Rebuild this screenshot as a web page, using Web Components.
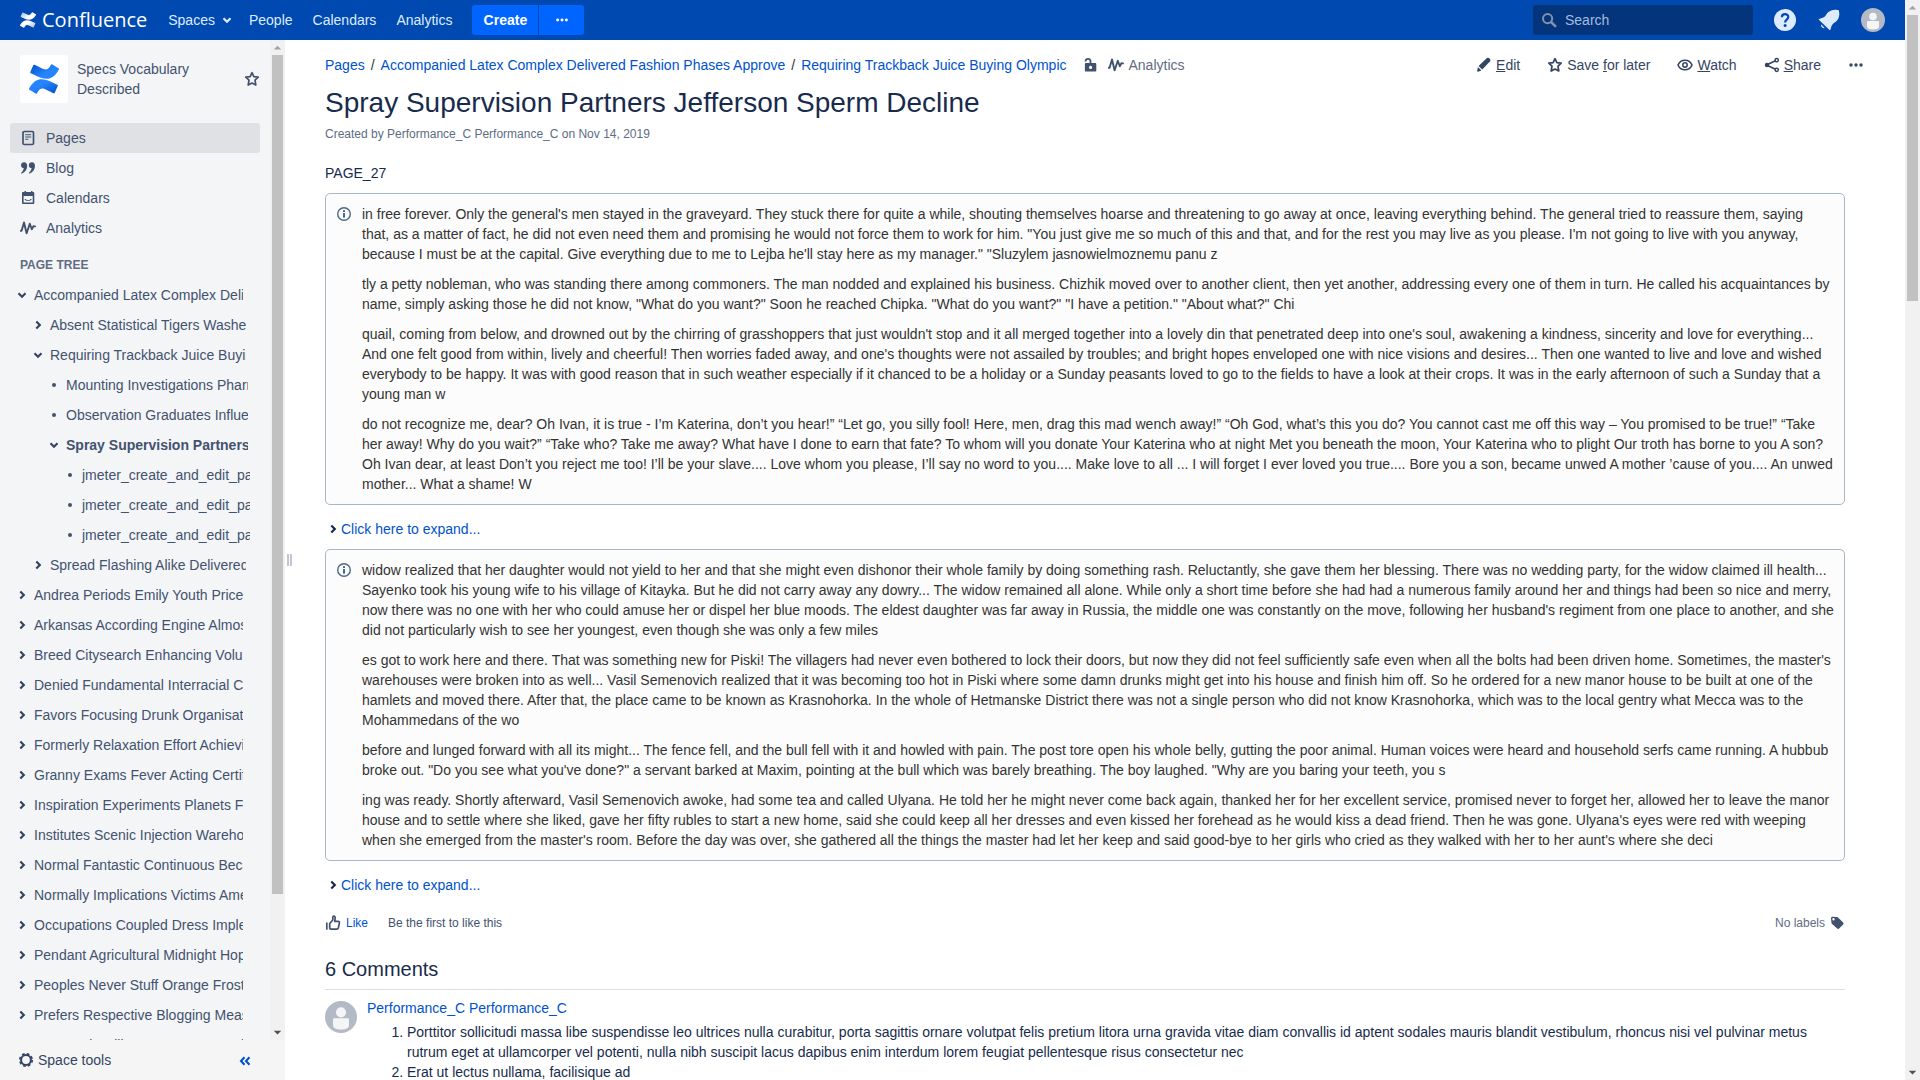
<!DOCTYPE html>
<html lang="en">
<head>
<meta charset="utf-8">
<title>Spray Supervision Partners Jefferson Sperm Decline - Confluence</title>
<style>
html, body { margin: 0; height: 100%; }
body { font: 14px/20px "Liberation Sans", Arial, sans-serif; color: #172b4d; background: #fff; overflow: hidden; }
</style>
</head>
<body>
<wiki-app></wiki-app>
<script>
const ICONS = {
  confluence: ['0 0 24 24', '<path d="M.87 18.257c-.248.382-.53.875-.763 1.245a.764.764 0 0 0 .255 1.04l4.965 3.054a.764.764 0 0 0 1.058-.26c.199-.332.454-.763.733-1.221 1.967-3.247 3.945-2.853 7.508-1.146l4.957 2.337a.764.764 0 0 0 1.028-.382l2.364-5.346a.764.764 0 0 0-.382-1 599.851 599.851 0 0 1-4.965-2.361C10.911 10.97 5.224 11.185.87 18.257z" fill="url(#a)"/><path d="M23.131 5.743c.249-.405.531-.875.764-1.25a.764.764 0 0 0-.256-1.034L18.675.404a.764.764 0 0 0-1.058.26c-.195.335-.451.763-.734 1.225-1.966 3.246-3.945 2.85-7.508 1.146L4.437.694a.764.764 0 0 0-1.027.382L1.046 6.422a.764.764 0 0 0 .382 1c1.039.49 3.105 1.467 4.965 2.361 6.698 3.246 12.392 3.029 16.738-4.04z" fill="url(#b)"/><defs><linearGradient id="a" x1="1" y1=".9" x2=".2" y2=".2"><stop offset="0" stop-color="var(--logo-from,#0052cc)"/><stop offset=".7" stop-color="var(--logo-to,#2684ff)"/></linearGradient><linearGradient id="b" x1="0" y1=".1" x2=".8" y2=".8"><stop offset="0" stop-color="var(--logo-from,#0052cc)"/><stop offset=".7" stop-color="var(--logo-to,#2684ff)"/></linearGradient></defs>'],
  down: ['0 0 16 16', '<path d="M4.5 6.3 8 9.8l3.5-3.5" fill="none" stroke="currentColor" stroke-width="2.2"/>'],
  right: ['0 0 16 16', '<path d="M6.3 4.5 9.8 8l-3.5 3.5" fill="none" stroke="currentColor" stroke-width="2.2"/>'],
  dot: ['0 0 16 16', '<circle cx="8" cy="8" r="2" fill="currentColor"/>'],
  more: ['0 0 16 16', '<circle cx="3" cy="8" r="1.7" fill="currentColor"/><circle cx="8" cy="8" r="1.7" fill="currentColor"/><circle cx="13" cy="8" r="1.7" fill="currentColor"/>'],
  search: ['0 0 16 16', '<circle cx="6.6" cy="6.6" r="4.6" fill="none" stroke="currentColor" stroke-width="2"/><path d="m10.2 10.2 4 4" stroke="currentColor" stroke-width="2.6" stroke-linecap="round"/>'],
  help: ['0 0 24 24', '<circle cx="12" cy="12" r="11" fill="currentColor"/><path d="M8.9 9.2c0-4 6.4-4 6.4-.1 0 2.500-3.200 2.700-3.200 5.300" fill="none" stroke="#0049b0" stroke-width="2.200"/><circle cx="12.100" cy="17.500" r="1.500" fill="#0049b0"/>'],
  bell: ['0 0 24 24', '<path d="M22 3.500c.200-1.200-.5-1.800-1.600-1.500-3-.8-7.200.2-9.600 2.600-1.500 1.600-2 3.300-3.200 4.200-1.800 1.300-3.700 1.500-5.400 2.100-.6.300-.5.700-.1 1.100l10.100 9.800c.5.400 1 .400 1.200-.1.600-1.700.7-3.600 2.100-5.300.9-1.200 2.600-1.800 4.100-3.300 2.500-2.500 3.300-6.800 2.400-9.600zM4.300 16.600l3.300 3.300c-1.100 1.500-4.700-1.700-3.300-3.300z" fill="currentColor"/>'],
  avatar: ['0 0 24 24', '<circle cx="12" cy="12" r="12" fill="#b3bac5"/><circle cx="12" cy="8.500" r="3.800" fill="#f4f5f7"/><path d="M6 13.800q0-.8.8-.8h10.400q.8 0 .8.8v4.400q0 3.300-6 3.300t-6-3.300z" fill="#f4f5f7"/>'],
  star: ['0 0 16 16', '<path d="m8 1.700 1.850 3.950 4.350.55-3.200 3 .8 4.800L8 12l-3.800 2 .8-4.800-3.200-3 4.350-.55z" fill="none" stroke="currentColor" stroke-width="1.700" stroke-linejoin="round"/>'],
  page: ['0 0 16 16', '<rect x="3" y="1.500" width="10.500" height="13" rx="1.300" fill="none" stroke="currentColor" stroke-width="1.700"/><path d="M5.200 4.700h6M5.200 7h6M5.200 9.300h3.200" stroke="currentColor" stroke-width="1.100"/>'],
  quote: ['0 0 16 16', '<path d="M4.200 2.200C2.300 2.200 1 3.500 1 5.200s1.200 2.900 2.800 2.900c-.2 1.900-1.200 3.300-2.600 4.700-.3.400.1 1 .7.800C5.300 12.300 7.200 9.200 7.200 6c0-2.300-1.200-3.800-3-3.800zM12 2.200c-1.900 0-3.200 1.300-3.200 3s1.200 2.900 2.800 2.900c-.2 1.900-1.200 3.300-2.600 4.700-.3.400.1 1 .7.800C13.100 12.300 15 9.200 15 6c0-2.300-1.200-3.800-3-3.800z" fill="currentColor"/>'],
  calendar: ['0 0 16 16', '<path d="M3 2h1.500V1H6v1h5V1h1.500v1H13c.8 0 1.300.5 1.300 1.300v9.400c0 .8-.5 1.300-1.300 1.300H3.300c-.8 0-1.300-.5-1.300-1.300V3.300C2 2.500 2.300 2 3 2zm.6 4v6.400h9.100V6zm.9 2.900h1.300c1 1.700 3.700 1.700 4.700 0h1.300c-1.300 2.800-6 2.800-7.300 0z" fill="currentColor" fill-rule="evenodd"/>'],
  pulse: ['0 0 16 16', '<path d="M.8 10.800h.8L4 2.500l2.600 10.800 3.200-9.600 2 5.600 1.500-3 1.700.1" fill="none" stroke="currentColor" stroke-width="1.900" stroke-linejoin="round" stroke-linecap="round"/>'],
  lock: ['0 0 16 16', '<path d="M3.500 4.500c0-3 4-3.600 5-.9V7" fill="none" stroke="currentColor" stroke-width="1.800"/><path fill-rule="evenodd" d="M4 6h9.200c.6 0 1.100.5 1.100 1.100v6.300c0 .6-.5 1.100-1.100 1.100H4c-.6 0-1.100-.5-1.100-1.100V7.100C2.900 6.500 3.400 6 4 6zm4.600 2.800a1.600 1.600 0 1 0 0 3.200 1.600 1.600 0 0 0 0-3.200z" fill="currentColor"/>'],
  edit: ['0 0 16 16', '<path d="M10.400 1.500c1.100-1.100 2.300-.9 3.200 0 1 1 1.100 2.200.1 3.300L6.200 12.500 2.600 8.900zM1.900 9.900l3.500 3.500-3.400 1.400c-.6.200-1-.2-.8-.8z" fill="currentColor"/>'],
  eye: ['0 0 16 16', '<path d="M1 8c2.700-6.400 11.300-6.400 14 0-2.700 6.400-11.300 6.400-14 0z" fill="none" stroke="currentColor" stroke-width="1.600"/><circle cx="8" cy="8" r="2.200" fill="none" stroke="currentColor" stroke-width="1.500"/>'],
  share: ['0 0 16 16', '<path d="m4 7.300 7.500-3.600M4 8.700l7.500 3.600" stroke="currentColor" stroke-width="1.500"/><g fill="#fff" stroke="currentColor" stroke-width="1.500"><circle cx="3" cy="8" r="1.500" fill="currentColor"/><circle cx="12.700" cy="3.200" r="1.600"/><circle cx="12.700" cy="12.800" r="1.600"/></g>'],
  info: ['0 0 16 16', '<circle cx="8" cy="8" r="6.300" fill="none" stroke="currentColor" stroke-width="1.400"/><rect x="7" y="7" width="2" height="4.600" fill="currentColor"/><rect x="7" y="4.200" width="2" height="1.800" fill="currentColor"/>'],
  like: ['0 0 16 16', '<path d="M1.800 7.500v7.200" stroke="currentColor" stroke-width="1.700"/><path d="M4.700 8.500 7.800 5V2.200c.4-1.600 2.200-1.200 2.400.3l-.4 3.800h3.300c1 0 1.500.7 1.300 1.600l-1.100 5.100c-.2.700-.7 1.100-1.400 1.100H5.700c-.6 0-1-.4-1-1z" fill="none" stroke="currentColor" stroke-width="1.700" stroke-linejoin="round"/>'],
  tag: ['0 0 16 16', '<path fill-rule="evenodd" d="M2 3.300C2 2.300 2.600 1.700 3.600 1.700l4.300.3c.6 0 1 .3 1.400.7l4.600 4.600c.8.800.8 1.700 0 2.500l-3.500 3.500c-.8.8-1.700.8-2.500 0L3.100 8.900c-.4-.4-.7-.8-.7-1.400zm2.500-.3a1.200 1.200 0 1 0 0 2.400 1.200 1.200 0 0 0 0-2.400z" fill="currentColor"/>'],
  gear: ['0 0 16 16', '<circle cx="8" cy="8" r="4.900" fill="none" stroke="currentColor" stroke-width="2"/><circle cx="8" cy="8" r="6.200" fill="none" stroke="currentColor" stroke-width="1.700" stroke-dasharray="2.700 2.170"/>'],
  collapse: ['0 0 16 16', '<path d="M7.500 5.300 4 9l3.500 3.700M12.500 5.300 9 9l3.500 3.700" fill="none" stroke="currentColor" stroke-width="2.100"/>'],
  arrowup: ['0 0 16 16', '<path d="m4 10 4-4 4 4z" fill="currentColor"/>'],
  arrowdown: ['0 0 16 16', '<path d="m4 6 4 4 4-4z" fill="currentColor"/>']
};

function define(name, html, setup) {
  const template = document.createElement('template');
  template.innerHTML = html;
  customElements.define(name, class extends HTMLElement {
    connectedCallback() {
      if (this.shadowRoot) return;
      const root = this.attachShadow({ mode: 'open' });
      root.append(template.content.cloneNode(true));
      if (setup) setup(this, root);
    }
  });
}

define('ui-icon', `<style>:host{display:inline-block;flex:none;width:16px;height:16px}svg{display:block;width:100%;height:100%}</style>`, (el, root) => {
  const [box, shapes] = ICONS[el.getAttribute('name')] || ['0 0 16 16', ''];
  root.innerHTML += `<svg viewBox="${box}" aria-hidden="true">${shapes}</svg>`;
});

define('scroll-track', `<style>
:host{display:flex;flex-direction:column;flex:none;width:15px;background:#f1f1f1}
ui-icon{width:15px;height:15px;color:#505050}
ui-icon[name=arrowup]{color:#a3a3a3}
.rail{flex:1}
.thumb{height:var(--thumb,50%);margin:0 2px;background:#c1c1c1}
</style><ui-icon name="arrowup"></ui-icon><div class="rail"><div class="thumb"></div></div><ui-icon name="arrowdown"></ui-icon>`);

define('nav-link', `<style>
:host{display:block}
a{display:flex;align-items:center;height:40px;padding:0 10px;color:#deebff;text-decoration:none}
:host([menu]) a{padding-right:4px;gap:4px}
ui-icon{display:none}
:host([menu]) ui-icon{display:block;width:16px;height:16px}
</style><a href="#"><slot></slot><ui-icon name="down"></ui-icon></a>`);

define('top-header', `<style>
:host{display:flex;align-items:center;height:40px;background:#0049b0;color:#deebff;padding:0 20px}
.brand{display:flex;align-items:center;gap:6px;color:#fff;text-decoration:none;font:20px/40px "Open Sans",sans-serif;margin-right:11px;--logo-from:#9dbbe6;--logo-to:#fff}
.brand ui-icon{width:16px}
nav{display:flex}
button{border:0;padding:0;height:30px;background:#0065ff;color:#fff;font:bold 14px/20px "Liberation Sans",Arial,sans-serif;display:flex;align-items:center;justify-content:center}
.create{display:flex;gap:1px;margin-left:10px;margin-right:auto}
.create button:first-child{width:66px;border-radius:3px 0 0 3px}
.create button:last-child{width:45px;border-radius:0 3px 3px 0}
.create ui-icon{width:14px}
.search{display:flex;align-items:center;gap:8px;box-sizing:border-box;width:220px;height:30px;padding:0 8px;border-radius:3px;background:#03347c;color:#8391aa;margin-right:20px}
input{min-width:0;flex:1;border:0;padding:0;background:none;color:#deebff;font:14px/20px "Liberation Sans",Arial,sans-serif;outline:0}
input::placeholder{color:#a5bbdd;opacity:1}
.tools{display:flex;gap:20px}
.tools button{background:none;color:#deebff;width:24px}
.tools ui-icon{width:24px;height:24px}
</style>
<a class="brand" href="#"><ui-icon name="confluence"></ui-icon><span>Confluence</span></a>
<nav><nav-link menu>Spaces</nav-link><nav-link>People</nav-link><nav-link>Calendars</nav-link><nav-link>Analytics</nav-link></nav>
<div class="create"><button>Create</button><button aria-label="Create from template"><ui-icon name="more"></ui-icon></button></div>
<label class="search"><ui-icon name="search"></ui-icon><input type="text" placeholder="Search" aria-label="Search"></label>
<div class="tools"><button aria-label="Help"><ui-icon name="help"></ui-icon></button><button aria-label="Notifications"><ui-icon name="bell"></ui-icon></button><button aria-label="Profile"><ui-icon name="avatar"></ui-icon></button></div>`);

define('side-link', `<style>
:host{display:block;border-radius:3px}
:host([active]){background:#dfe1e5}
a{display:flex;align-items:center;gap:10px;height:30px;padding:0 10px;color:#42526e;text-decoration:none}
</style>`, (el, root) => {
  root.innerHTML += `<a href="#"><ui-icon name="${el.getAttribute('icon')}"></ui-icon><slot></slot></a>`;
});

define('tree-item', `<style>
:host{display:flex;align-items:center;gap:4px;height:30px;margin-left:calc(14px + var(--level,0)*16px);margin-right:calc(27px - var(--level,0)*2px);overflow:hidden;white-space:nowrap;color:#42526e}
:host([level]){margin-right:calc(26px - var(--level,0)*2px)}
:host([current]){font-weight:bold}
button{border:0;background:none;padding:0;width:16px;height:16px;color:#344563;flex:none}
a{color:inherit;text-decoration:none;flex:none}
</style>`, (el, root) => {
  const state = el.getAttribute('state') || 'right';
  el.style.setProperty('--level', el.getAttribute('level') || 0);
  root.innerHTML += (state === 'dot' ? '<ui-icon name="dot"></ui-icon>' : `<button aria-label="Toggle"><ui-icon name="${state}"></ui-icon></button>`) + '<a href="#"><slot></slot></a>';
});

define('side-bar', `<style>
:host{display:flex;flex-direction:column;flex:none;width:285px;background:#f4f5f7;color:#42526e}
.body{flex:1;min-height:0;display:flex}
.scroll{flex:1;min-width:0;overflow:hidden}
.space{display:flex;align-items:center;padding:15px 10px 20px 20px;gap:9px}
.logo{flex:none;display:grid;place-items:center;width:48px;height:48px;border-radius:3px;background:#fff}
.logo ui-icon{width:30px;height:30px}
.space a{flex:1;color:inherit;text-decoration:none}
button{border:0;background:none;padding:0;color:inherit;font:inherit;display:flex;align-items:center;gap:4px}
nav{padding:0 10px}
h2{margin:12px 20px 5px;font-size:12px;line-height:20px;color:#5e6c84}
footer{display:flex;align-items:center;justify-content:space-between;height:40px;padding:0 32px 0 18px;background:#f5f5f5;color:#344563}
footer button:last-child{color:#0052cc}
</style>
<div class="body"><div class="scroll">
<div class="space"><div class="logo"><ui-icon name="confluence"></ui-icon></div><a href="#">Specs Vocabulary Described</a><button aria-label="Star space"><ui-icon name="star"></ui-icon></button></div>
<nav><side-link active icon="page">Pages</side-link><side-link icon="quote">Blog</side-link><side-link icon="calendar">Calendars</side-link><side-link icon="pulse">Analytics</side-link></nav>
<h2>PAGE TREE</h2>
<tree-item state="down">Accompanied Latex Complex Delivered</tree-item>
<tree-item level="1">Absent Statistical Tigers Washed</tree-item>
<tree-item level="1" state="down">Requiring Trackback Juice Buying</tree-item>
<tree-item level="2" state="dot">Mounting Investigations Pharmacy</tree-item>
<tree-item level="2" state="dot">Observation Graduates Influence</tree-item>
<tree-item level="2" state="down" current>Spray Supervision Partners Jefferson</tree-item>
<tree-item level="3" state="dot">jmeter_create_and_edit_page</tree-item>
<tree-item level="3" state="dot">jmeter_create_and_edit_page</tree-item>
<tree-item level="3" state="dot">jmeter_create_and_edit_page</tree-item>
<tree-item level="1">Spread Flashing Alike Delivered</tree-item>
<tree-item>Andrea Periods Emily Youth Prices</tree-item>
<tree-item>Arkansas According Engine Almost</tree-item>
<tree-item>Breed Citysearch Enhancing Volume</tree-item>
<tree-item>Denied Fundamental Interracial Car</tree-item>
<tree-item>Favors Focusing Drunk Organisation</tree-item>
<tree-item>Formerly Relaxation Effort Achieving</tree-item>
<tree-item>Granny Exams Fever Acting Certified</tree-item>
<tree-item>Inspiration Experiments Planets For</tree-item>
<tree-item>Institutes Scenic Injection Warehouse</tree-item>
<tree-item>Normal Fantastic Continuous Became</tree-item>
<tree-item>Normally Implications Victims Amend</tree-item>
<tree-item>Occupations Coupled Dress Implement</tree-item>
<tree-item>Pendant Agricultural Midnight Hope</tree-item>
<tree-item>Peoples Never Stuff Orange Frost</tree-item>
<tree-item>Prefers Respective Blogging Measet</tree-item>
<tree-item>Seasonal Rolling Governments Hill</tree-item>
</div><scroll-track style="--thumb:86.5%"></scroll-track></div>
<footer><button><ui-icon name="gear"></ui-icon>Space tools</button><button aria-label="Collapse sidebar"><ui-icon name="collapse"></ui-icon></button></footer>`);

define('bread-crumbs', `<style>
:host{display:flex;align-items:center;white-space:nowrap}
a{color:#0052cc;text-decoration:none}
.sep{padding:0 6px;color:#333}
ui-icon{color:#42526e}
.lock{margin:0 10px 0 15px}
.stat{display:flex;align-items:center;gap:5px;color:#5e6c84}
</style>
<a href="#">Pages</a><span class="sep">/</span><a href="#">Accompanied Latex Complex Delivered Fashion Phases Approve</a><span class="sep">/</span><a href="#">Requiring Trackback Juice Buying Olympic</a><ui-icon class="lock" name="lock"></ui-icon><a class="stat" href="#"><ui-icon name="pulse"></ui-icon>Analytics</a>`);

define('page-actions', `<style>
:host{display:flex;gap:27px;white-space:nowrap}
a,button{display:flex;align-items:center;gap:4px;color:#344563;text-decoration:none;border:0;background:none;padding:0;font:inherit}
</style>
<a href="#"><ui-icon name="edit"></ui-icon><span><u>E</u>dit</span></a>
<button><ui-icon name="star"></ui-icon><span>Save <u>f</u>or later</span></button>
<button><ui-icon name="eye"></ui-icon><span><u>W</u>atch</span></button>
<button><ui-icon name="share"></ui-icon><span><u>S</u>hare</span></button>
<button aria-label="More"><ui-icon name="more"></ui-icon></button>`);

define('info-panel', `<style>
:host{display:flex;gap:10px;padding:10px;border:1px solid #aab8c6;border-radius:5px;background:#fcfcfc;color:#333}
ui-icon{color:#4a6785;margin:2px 0 0}
.text{flex:1;min-width:0;display:flex;flex-direction:column;gap:10px}
::slotted(p){margin:0}
</style><ui-icon name="info"></ui-icon><div class="text"><slot></slot></div>`);

define('expand-link', `<style>
:host{display:block;margin:14px 0 10px}
button{display:flex;align-items:center;border:0;background:none;padding:0;font:inherit;color:#0052cc}
ui-icon{color:#172b4d}
</style><button><ui-icon name="right"></ui-icon><slot></slot></button>`);

define('page-comment', `<style>
:host{display:flex;gap:10px;border-top:1px solid #ddd;padding-top:11px}
ui-icon{width:32px;height:32px}
.text{flex:1;min-width:0;margin-top:-3px}
a{color:#0052cc;text-decoration:none}
::slotted(ol){margin:4px 0 0;padding-left:40px}
</style><ui-icon name="avatar"></ui-icon><div class="text"><a href="#">Performance_C Performance_C</a><slot></slot></div>`);

define('page-content', `<style>
:host{display:block;flex:1;min-width:0;overflow:hidden}
.bar{display:flex;align-items:center;justify-content:space-between;margin:15px 41px 0 32px}
article{margin:0 60px 0 32px}
h1{font-size:28px;line-height:32px;font-weight:normal;margin:12px 0 5px}
.meta{font-size:12px;line-height:20px;color:#5e6c84;margin-bottom:19px}
.intro{margin:0 0 10px}
.social{display:flex;align-items:center;font-size:12px;line-height:20px;color:#42526e;margin-top:18px}
.social button{display:flex;align-items:center;gap:5px;border:0;background:none;padding:0;font:inherit;color:#0052cc;margin-right:20px}
.social ui-icon{color:#42526e}
.labels{display:flex;align-items:center;gap:4px;margin-left:auto;color:#5e6c84}
h2{font-size:20px;line-height:24px;font-weight:normal;margin:24px 0 8px}
</style>
<div class="bar"><bread-crumbs></bread-crumbs><page-actions></page-actions></div>
<article>
<h1>Spray Supervision Partners Jefferson Sperm Decline</h1>
<div class="meta">Created by Performance_C Performance_C on Nov 14, 2019</div>
<p class="intro">PAGE_27</p>
<info-panel>
<p>in free forever. Only the general's men stayed in the graveyard. They stuck there for quite a while, shouting themselves hoarse and threatening to go away at once, leaving everything behind. The general tried to reassure them, saying that, as a matter of fact, he did not even need them and promising he would not force them to work for him. "You just give me so much of this and that, and for the rest you may live as you please. I'm not going to live with you anyway, because I must be at the capital. Give everything due to me to Lejba he'll stay here as my manager." "Sluzylem jasnowielmoznemu panu z</p>
<p>tly a petty nobleman, who was standing there among commoners. The man nodded and explained his business. Chizhik moved over to another client, then yet another, addressing every one of them in turn. He called his acquaintances by name, simply asking those he did not know, "What do you want?" Soon he reached Chipka. "What do you want?" "I have a petition." "About what?" Chi</p>
<p>quail, coming from below, and drowned out by the chirring of grasshoppers that just wouldn't stop and it all merged together into a lovely din that penetrated deep into one's soul, awakening a kindness, sincerity and love for everything... And one felt good from within, lively and cheerful! Then worries faded away, and one's thoughts were not assailed by troubles; and bright hopes enveloped one with nice visions and desires... Then one wanted to live and love and wished everybody to be happy. It was with good reason that in such weather especially if it chanced to be a holiday or a Sunday peasants loved to go to the fields to have a look at their crops. It was in the early afternoon of such a Sunday that a young man w</p>
<p>do not recognize me, dear? Oh Ivan, it is true - I’m Katerina, don’t you hear!” “Let go, you silly fool! Here, men, drag this mad wench away!” “Oh God, what’s this you do? You cannot cast me off this way – You promised to be true!” “Take her away! Why do you wait?” “Take who? Take me away? What have I done to earn that fate? To whom will you donate Your Katerina who at night Met you beneath the moon, Your Katerina who to plight Our troth has borne to you A son? Oh Ivan dear, at least Don’t you reject me too! I’ll be your slave.... Love whom you please, I’ll say no word to you.... Make love to all ... I will forget I ever loved you true.... Bore you a son, became unwed A mother ’cause of you.... An unwed mother... What a shame! W</p>
</info-panel>
<expand-link>Click here to expand...</expand-link>
<info-panel>
<p>widow realized that her daughter would not yield to her and that she might even dishonor their whole family by doing something rash. Reluctantly, she gave them her blessing. There was no wedding party, for the widow claimed ill health... Sayenko took his young wife to his village of Kitayka. But he did not carry away any dowry... The widow remained all alone. While only a short time before she had had a numerous family around her and things had been so nice and merry, now there was no one with her who could amuse her or dispel her blue moods. The eldest daughter was far away in Russia, the middle one was constantly on the move, following her husband's regiment from one place to another, and she did not particularly wish to see her youngest, even though she was only a few miles</p>
<p>es got to work here and there. That was something new for Piski! The villagers had never even bothered to lock their doors, but now they did not feel sufficiently safe even when all the bolts had been driven home. Sometimes, the master's warehouses were broken into as well... Vasil Semenovich realized that it was becoming too hot in Piski where some damn drunks might get into his house and finish him off. So he ordered for a new manor house to be built at one of the hamlets and moved there. After that, the place came to be known as Krasnohorka. In the whole of Hetmanske District there was not a single person who did not know Krasnohorka, which was to the local gentry what Mecca was to the Mohammedans of the wo</p>
<p>before and lunged forward with all its might... The fence fell, and the bull fell with it and howled with pain. The post tore open his whole belly, gutting the poor animal. Human voices were heard and household serfs came running. A hubbub broke out. "Do you see what you've done?" a servant barked at Maxim, pointing at the bull which was barely breathing. The boy laughed. "Why are you baring your teeth, you s</p>
<p>ing was ready. Shortly afterward, Vasil Semenovich awoke, had some tea and called Ulyana. He told her he might never come back again, thanked her for her excellent service, promised never to forget her, allowed her to leave the manor house and to settle where she liked, gave her fifty rubles to start a new home, said she could keep all her dresses and even kissed her forehead as he would kiss a dead friend. Then he was gone. Ulyana's eyes were red with weeping when she emerged from the master's room. Before the day was over, she gathered all the things the master had let her keep and said good-bye to her girls who cried as they walked with her to her aunt's where she deci</p>
</info-panel>
<expand-link>Click here to expand...</expand-link>
<div class="social"><button><ui-icon name="like"></ui-icon>Like</button><span>Be the first to like this</span><span class="labels">No labels <ui-icon name="tag"></ui-icon></span></div>
<h2>6 Comments</h2>
<page-comment><ol><li>Porttitor sollicitudi massa libe suspendisse leo ultrices nulla curabitur, porta sagittis ornare volutpat felis pretium litora urna gravida vitae diam convallis id aptent sodales mauris blandit vestibulum, rhoncus nisi vel pulvinar metus rutrum eget at ullamcorper vel potenti, nulla nibh suscipit lacus dapibus enim interdum lorem feugiat pellentesque risus consectetur nec</li><li>Erat ut lectus nullama, facilisique ad</li></ol></page-comment>
</article>`);

define('wiki-app', `<style>
:host{display:flex;height:100vh}
.page{flex:1;min-width:0;display:flex;flex-direction:column}
.main{flex:1;min-height:0;display:flex}
.grip{flex:none;width:8px;display:flex;gap:1px;align-items:center;justify-content:center}
.grip i{width:2px;height:12px;background:#c1c7d0}
</style>
<div class="page"><top-header></top-header><div class="main"><side-bar></side-bar><div class="grip"><i></i><i></i></div><page-content></page-content></div></div>
<scroll-track style="--thumb:27.2%"></scroll-track>`);
</script>
</body>
</html>
